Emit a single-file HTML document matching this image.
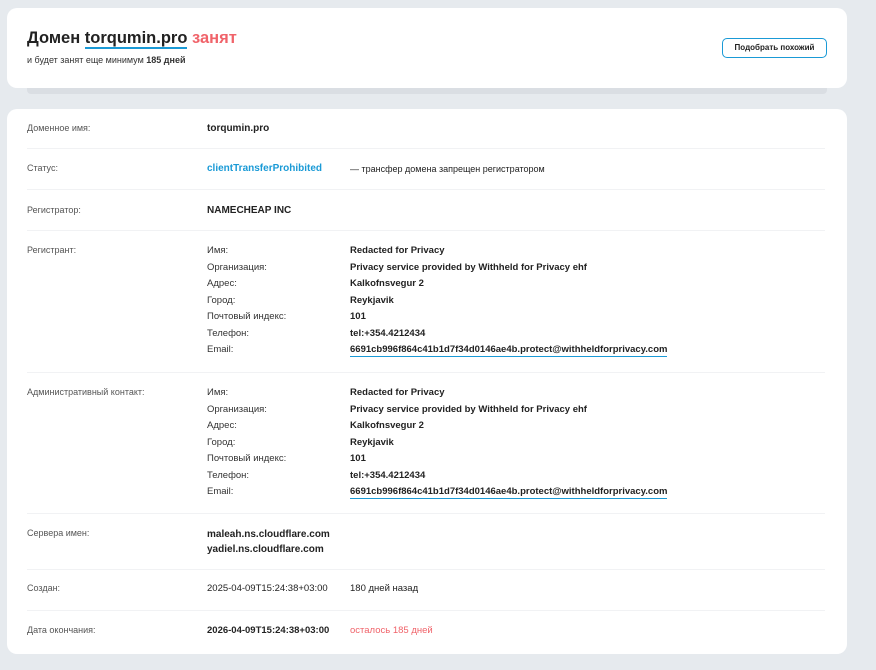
<!DOCTYPE html>
<html><head><meta charset="utf-8"><style>
*{margin:0;padding:0;box-sizing:border-box}
body{width:876px;height:670px;background:#e6eaee;font-family:"Liberation Sans","DejaVu Sans",sans-serif;color:#222;position:relative;overflow:hidden}
.card{position:absolute;background:#fff;border-radius:10px}
.t{position:absolute;white-space:nowrap;line-height:14px}
.l{font-size:9px;color:#555;left:27px}
.v{font-size:10px;font-weight:bold;color:#222}
.n{font-size:10px;color:#222}
.sep{position:absolute;left:27px;width:798px;height:1px;background:#f1f2f4}
.u{border-bottom:1.5px solid #1a9ad6;padding-bottom:1px}
</style></head><body>
<div style="position:absolute;left:27px;top:86px;width:800px;height:8px;background:#dadee3;border-radius:0 0 4px 4px"></div>
<div class="card" style="left:7px;top:8px;width:840px;height:80px"></div>
<div class="t" style="left:27px;top:27px;font-size:16.5px;line-height:22px;font-weight:bold;color:#222">Домен <span style="display:inline-block;line-height:18px;border-bottom:2px solid #1a9ad6">torqumin.pro</span> <span style="color:#f0636a">занят</span></div>
<div class="t" style="left:27px;top:53px;font-size:9px;color:#333">и будет занят еще минимум <b>185 дней</b></div>
<div style="position:absolute;left:722px;top:38px;width:105px;height:20px;border:1.5px solid #1a9ad6;border-radius:5px;font-size:8px;font-weight:bold;text-align:center;line-height:17px;color:#222">Подобрать похожий</div>

<div class="card" style="left:7px;top:109px;width:840px;height:545px"></div>

<div class="t l" style="top:121px">Доменное имя:</div>
<div class="t v" style="left:207px;top:122px">torqumin.pro</div>
<div class="sep" style="top:148px"></div>

<div class="t l" style="top:161px">Статус:</div>
<div class="t v" style="left:207px;top:162px;color:#1a9ad6">clientTransferProhibited</div>
<div class="t n" style="left:350px;top:162px;font-size:9px">— трансфер домена запрещен регистратором</div>
<div class="sep" style="top:189px"></div>

<div class="t l" style="top:203px">Регистратор:</div>
<div class="t v" style="left:207px;top:204px">NAMECHEAP INC</div>
<div class="sep" style="top:230px"></div>

<div class="t l" style="top:243px">Регистрант:</div>
<div style="position:absolute;left:207px;top:243px;font-size:9.5px;line-height:16.5px;color:#333">Имя:<br>Организация:<br>Адрес:<br>Город:<br>Почтовый индекс:<br>Телефон:<br>Email:</div>
<div style="position:absolute;left:350px;top:243px;font-size:9.5px;line-height:16.5px;font-weight:bold;color:#222;white-space:nowrap">Redacted for Privacy<br>Privacy service provided by Withheld for Privacy ehf<br>Kalkofnsvegur 2<br>Reykjavik<br>101<br>tel:+354.4212434<br><span class="u">6691cb996f864c41b1d7f34d0146ae4b.protect@withheldforprivacy.com</span></div>
<div class="sep" style="top:372px"></div>

<div class="t l" style="top:385px">Административный контакт:</div>
<div style="position:absolute;left:207px;top:385px;font-size:9.5px;line-height:16.5px;color:#333">Имя:<br>Организация:<br>Адрес:<br>Город:<br>Почтовый индекс:<br>Телефон:<br>Email:</div>
<div style="position:absolute;left:350px;top:385px;font-size:9.5px;line-height:16.5px;font-weight:bold;color:#222;white-space:nowrap">Redacted for Privacy<br>Privacy service provided by Withheld for Privacy ehf<br>Kalkofnsvegur 2<br>Reykjavik<br>101<br>tel:+354.4212434<br><span class="u">6691cb996f864c41b1d7f34d0146ae4b.protect@withheldforprivacy.com</span></div>
<div class="sep" style="top:513px"></div>

<div class="t l" style="top:526px">Сервера имен:</div>
<div class="t v" style="left:207px;top:527px;line-height:15px">maleah.ns.cloudflare.com<br>yadiel.ns.cloudflare.com</div>
<div class="sep" style="top:569px"></div>

<div class="t l" style="top:581px">Создан:</div>
<div class="t n" style="left:207px;top:582px;font-size:9.5px">2025-04-09T15:24:38+03:00</div>
<div class="t n" style="left:350px;top:582px;font-size:9.5px">180 дней назад</div>
<div class="sep" style="top:610px"></div>

<div class="t l" style="top:623px">Дата окончания:</div>
<div class="t v" style="left:207px;top:624px;font-size:9.5px">2026-04-09T15:24:38+03:00</div>
<div class="t n" style="left:350px;top:624px;font-size:9.5px;color:#f0636a">осталось 185 дней</div>
</body></html>
